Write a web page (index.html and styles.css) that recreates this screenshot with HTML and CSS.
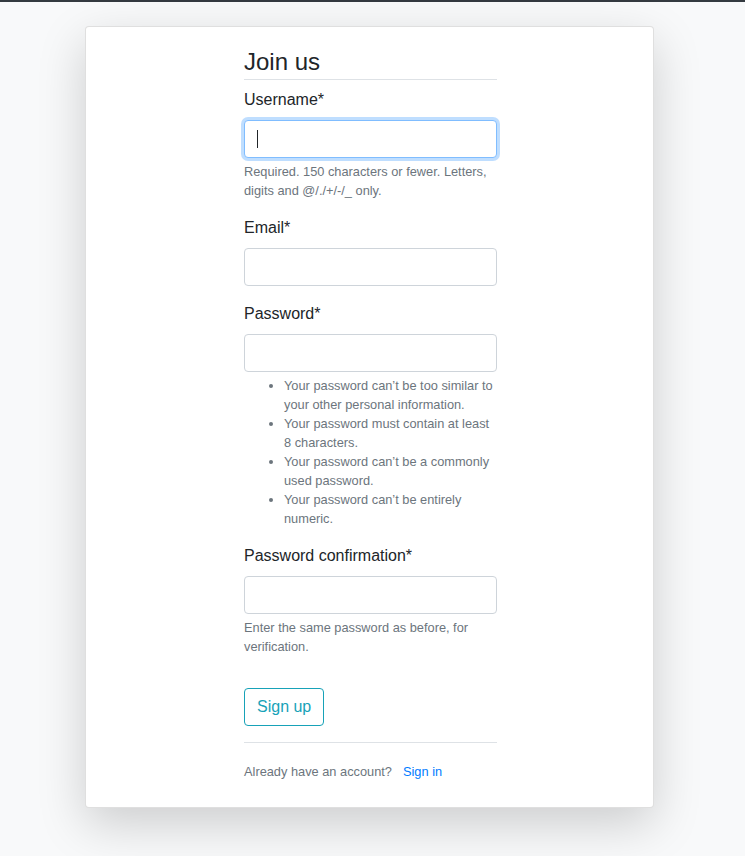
FILE: index.html
```html
<!DOCTYPE html>
<html lang="en">
<head>
<meta charset="utf-8">
<title>Join us</title>
<link rel="stylesheet" href="styles.css">
</head>
<body>
<div class="topbar"></div>
<main class="page">
  <div class="card">
    <form class="form">
      <h4 class="legend">Join us</h4>
      <div class="group">
        <label class="label">Username*</label>
        <div class="input-wrap focused"><input class="input" type="text"><span class="caret"></span></div>
        <small class="help">Required. 150 characters or fewer. Letters, digits and @/./+/-/_ only.</small>
      </div>
      <div class="group">
        <label class="label">Email*</label>
        <div class="input-wrap"><input class="input" type="email"></div>
      </div>
      <div class="group">
        <label class="label">Password*</label>
        <div class="input-wrap"><input class="input" type="password"></div>
        <ul class="help rules">
          <li>Your password can’t be too similar to your other personal information.</li>
          <li>Your password must contain at least 8 characters.</li>
          <li>Your password can’t be a commonly used password.</li>
          <li>Your password can’t be entirely numeric.</li>
        </ul>
      </div>
      <div class="group group-confirm">
        <label class="label">Password confirmation*</label>
        <div class="input-wrap"><input class="input" type="password"></div>
        <small class="help">Enter the same password as before, for verification.</small>
      </div>
      <button class="btn" type="button">Sign up</button>
      <div class="footer">
        <small class="muted">Already have an account?</small>
        <a class="signin" href="#">Sign in</a>
      </div>
    </form>
  </div>
</main>
</body>
</html>
```
FILE: styles.css
```css
* { box-sizing: border-box; }
html, body { margin: 0; padding: 0; }
body {
  background: #f8f9fa;
  font-family: "Liberation Sans", Arial, sans-serif;
  color: #212529;
  font-size: 16px;
  line-height: 1.5;
  height: 856px;
  overflow: hidden;
}
.topbar { height: 2px; background: #343a40; }
.page { padding-top: 24px; }
.card {
  width: 569px;
  margin-left: 85px;
  background: #fff;
  border: 1px solid rgba(0,0,0,.125);
  border-radius: 4px;
  box-shadow: 0 16px 48px rgba(0,0,0,.175);
  padding: 21px 0 26px;
}
.form { width: 253px; margin: 0 0 0 158px; }
.legend {
  margin: 0 0 8px;
  font-size: 24px;
  font-weight: 400;
  line-height: 1.2;
  padding-bottom: 2px;
  border-bottom: 1px solid #dee2e6;
}
.group { margin-bottom: 16px; }
.label { display: block; margin-bottom: 8px; font-size: 16px; line-height: 24px; }
.input-wrap { position: relative; }
.input {
  display: block;
  width: 100%;
  height: 38px;
  border: 1px solid #ced4da;
  border-radius: 4px;
  background: #fff;
  font: inherit;
  padding: 6px 12px;
  outline: none;
}
.focused .input {
  border-color: #80bdff;
  box-shadow: 0 0 0 3px rgba(0,123,255,.25);
}
.caret {
  position: absolute;
  left: 13px;
  top: 10px;
  width: 1px;
  height: 18px;
  background: #212529;
}
.help {
  display: block;
  margin-top: 4px;
  font-size: 12.8px;
  line-height: 19.2px;
  color: #6c757d;
}
.rules {
  margin: 4px 0 0;
  padding-left: 40px;
  line-height: 19px;
}
.group-confirm .input-wrap { margin-top: 1px; }
.group-confirm { margin-bottom: 31px; }
.btn {
  display: inline-block;
  height: 38px;
  padding: 6px 12px;
  font: inherit;
  font-size: 16px;
  line-height: 24px;
  color: #17a2b8;
  background: transparent;
  border: 1px solid #17a2b8;
  border-radius: 4px;
}
.footer {
  margin-top: 16px;
  border-top: 1px solid #dee2e6;
  padding-top: 19px;
  display: flex;
  align-items: baseline;
  gap: 11px;
}
.muted { font-size: 12.8px; color: #6c757d; line-height: 19.2px; }
.signin { font-size: 12.8px; color: #007bff; text-decoration: none; line-height: 19.2px; }
```
